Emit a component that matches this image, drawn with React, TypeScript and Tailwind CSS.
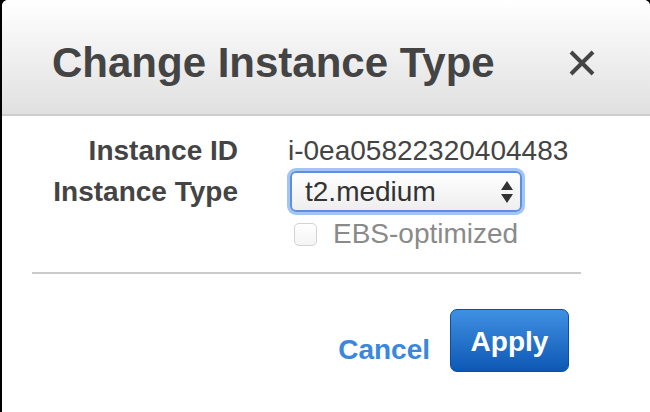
import { useState } from 'react';

export default function App() {
  const [ebs, setEbs] = useState(false);

  return (
    <div className="w-[650px] h-[412px] bg-black pl-[2px] font-['Liberation_Sans',Arial,sans-serif]">
      <div className="h-full bg-white rounded-tl-[6px] rounded-tr-[6px] overflow-hidden flex flex-col">
        {/* Header */}
        <div className="h-[116px] shrink-0 bg-gradient-to-b from-white to-[#e0e0e0] border-b-2 border-[#cdcdcd] flex items-center justify-between pt-[12px] pl-[50px] pr-[54px]">
          <h1 className="text-[42px] font-bold text-[#444444] leading-none">Change Instance Type</h1>
          <button className="w-[28px] h-[28px] flex items-center justify-center text-[#444444]">
            <svg width="26" height="26" viewBox="0 0 26 26" fill="none" stroke="currentColor" strokeWidth="4" strokeLinecap="butt">
              <path d="M2 2 L24 24 M24 2 L2 24" />
            </svg>
          </button>
        </div>

        {/* Body */}
        <div className="flex flex-col pt-[17px]">
          <div className="flex items-center h-[36px]">
            <div className="w-[236px] text-right text-[28px] font-bold text-[#444444]">Instance ID</div>
            <div className="ml-[50px] text-[28px] text-[#444444]">i-0ea05822320404483</div>
          </div>

          <div className="flex items-center h-[45px]">
            <div className="w-[236px] text-right text-[28px] font-bold text-[#444444]">Instance Type</div>
            <div className="ml-[52px] relative w-[232px] h-[41px] rounded-[6px] border-2 border-[#5a8fe2] shadow-[0_0_0_3px_#a3c4f4] bg-gradient-to-b from-white to-[#eeeeee] flex items-center pl-[13px]">
              <span className="text-[28px] text-[#333333] leading-none">t2.medium</span>
              <svg className="absolute right-[7px] top-[8px]" width="12" height="22" viewBox="0 0 12 22" fill="#333333">
                <path d="M6 0 L12 9 L0 9 Z" />
                <path d="M0 13 L12 13 L6 22 Z" />
              </svg>
            </div>
          </div>

          <div className="flex items-center h-[24px] mt-[8px]">
            <div className="w-[236px]" />
            <label className="ml-[56px] flex items-center gap-[16px] cursor-pointer">
              <span
                onClick={() => setEbs(!ebs)}
                className="w-[23px] h-[23px] rounded-[5px] border border-[#d3d3d3] bg-gradient-to-b from-white to-[#f4f4f4]"
              />
              <span className="text-[28px] text-[#8a8a8a] leading-none">EBS-optimized</span>
            </label>
          </div>

          <div className="ml-[30px] w-[549px] h-[2px] bg-[#cbcbcb] mt-[26px]" />

          <div className="flex items-end justify-end w-[567px] mt-[35px]">
            <button className="text-[28px] font-bold text-[#3a88dc] leading-none mb-[8px] mr-[20px]">Cancel</button>
            <button className="w-[119px] h-[63px] rounded-[7px] border border-[#0e4e9e] bg-gradient-to-b from-[#3f90e3] to-[#0b58b4] text-white text-[28px] font-bold leading-none pt-[2px]">
              Apply
            </button>
          </div>
        </div>
      </div>
    </div>
  );
}
